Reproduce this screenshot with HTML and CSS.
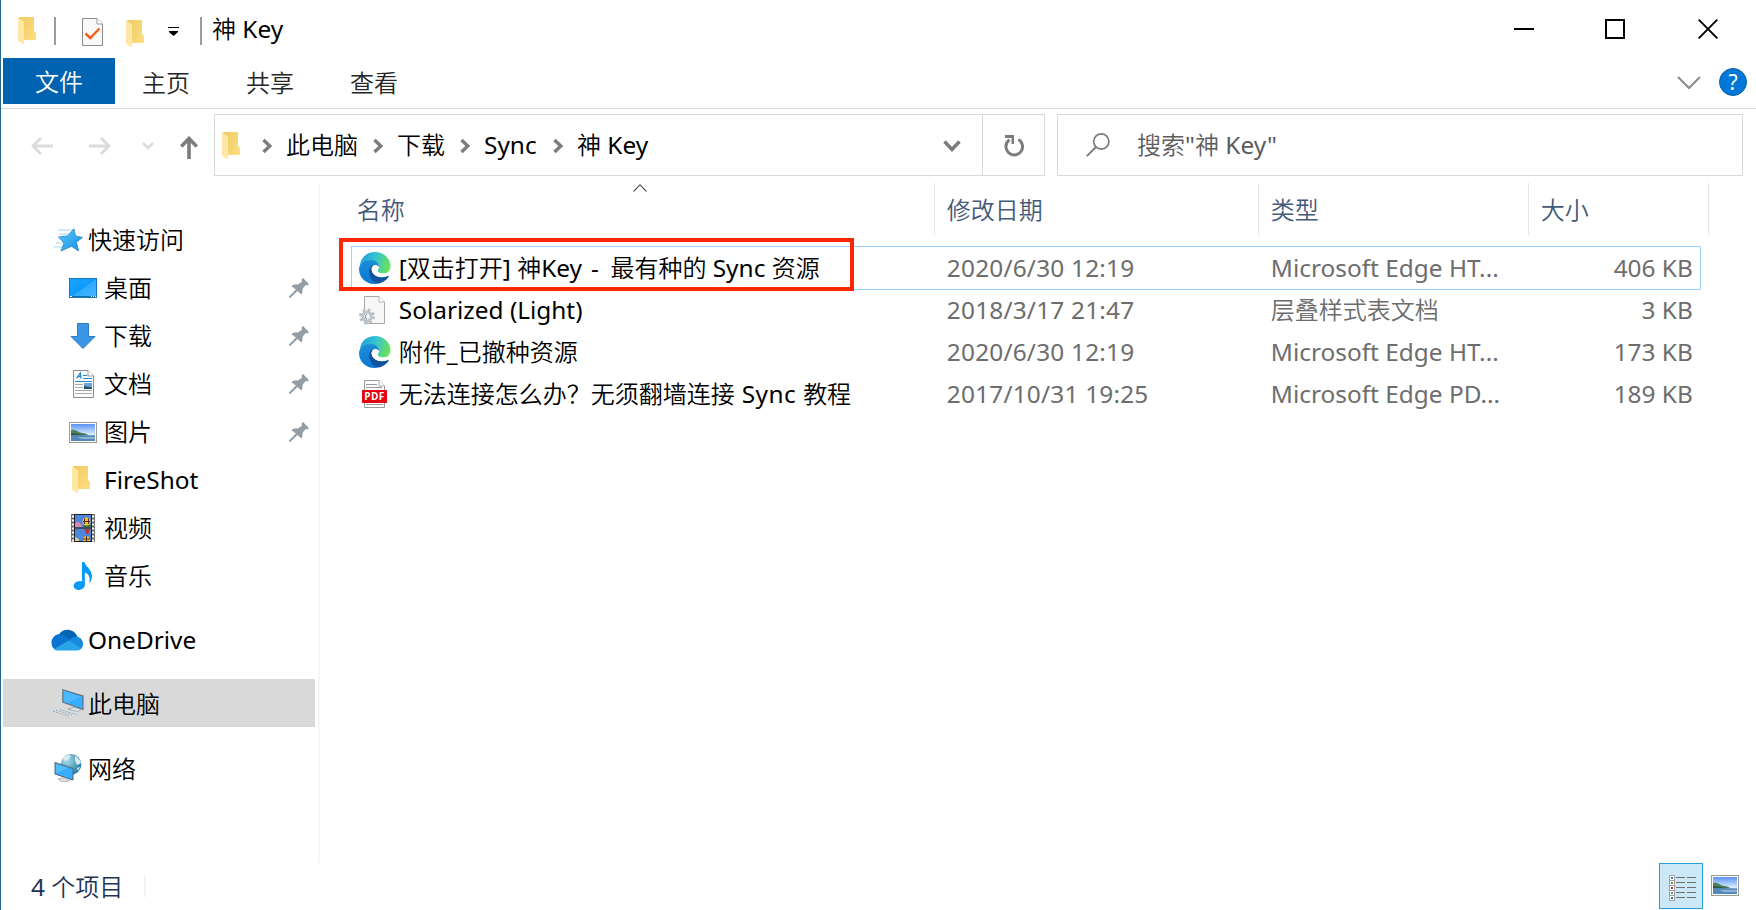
FILE: index.html
```html
<!DOCTYPE html>
<html lang="zh-CN">
<head>
<meta charset="utf-8">
<title>神 Key</title>
<link rel="stylesheet" href="styles.css">
</head>
<body>
<svg class="defs" width="0" height="0">
  <defs>
    <linearGradient id="gFold" x1="0" x2="1" y1="0" y2="1"><stop offset="0" stop-color="#efc964"/><stop offset="1" stop-color="#ffe083"/></linearGradient>
    <linearGradient id="gDesk" x1="0" x2="1" y1="0" y2="1"><stop offset="0" stop-color="#1aa3ff"/><stop offset=".5" stop-color="#0d9bfb"/><stop offset=".52" stop-color="#2fabff"/><stop offset="1" stop-color="#49b7ff"/></linearGradient>
    <linearGradient id="gSky" x1="0" x2="0" y1="0" y2="1"><stop offset="0" stop-color="#5a92f5"/><stop offset=".6" stop-color="#d5ebfb"/></linearGradient>
    <linearGradient id="gStar" x1="0" x2="1" y1="0" y2="1"><stop offset="0" stop-color="#5cc4fb"/><stop offset="1" stop-color="#1593e8"/></linearGradient>
    <linearGradient id="gEdgeTop" x1="0" x2="1" y1=".3" y2=".5"><stop offset="0" stop-color="#1f9fdc"/><stop offset=".5" stop-color="#36c3d2"/><stop offset="1" stop-color="#6ce357"/></linearGradient>
    <linearGradient id="gEdgeL" x1="0" x2="0" y1="0" y2="1"><stop offset="0" stop-color="#1b8fd6"/><stop offset="1" stop-color="#0a78d4"/></linearGradient>
    <radialGradient id="gGlobe" cx=".3" cy=".3" r=".8"><stop offset="0" stop-color="#a9dcec"/><stop offset="1" stop-color="#23789f"/></radialGradient>
    <symbol id="folder" viewBox="0 0 20 28">
      <path d="M1 0H16V14L18 16V23H6V27L1 24Z" fill="url(#gFold)"/>
      <path d="M0 0.5L6 4.5V27.5L1 24.5Q0 24 0 23Z" fill="#ffe8a6"/>
    </symbol>
    <symbol id="chev" viewBox="0 0 10 16"><path d="M1.5 2L7.8 8L1.5 14" fill="none" stroke="#7c7c7c" stroke-width="3.4"/></symbol>
    <symbol id="pin" viewBox="0 0 20 20">
      <path d="M14 0L20 6L18 7.5L16.5 7L13.5 11Q13.8 14.5 12.5 16.500L8.500 13L1.500 19.8L0 19.8V18.5L6.800 11.5L2.300 8Q5 5.800 8.8 6.500L13 3.8L12.5 1.8Z" fill="#929da4"/>
    </symbol>
    <symbol id="photo" viewBox="0 0 28 21">
      <rect x=".5" y=".5" width="27" height="20" fill="#fff" stroke="#9b9b9b"/>
      <rect x="2" y="2" width="24" height="17" fill="url(#gSky)"/>
      <path d="M2 8Q5 7 8 9T14 11T20 13.5H2Z" fill="#4e7f5c"/>
      <path d="M2 11Q8 11 17 13.5H2Z" fill="#2f5a43"/>
      <rect x="2" y="13.3" width="24" height="5.7" fill="#5588ba"/>
      <path d="M8 15H26V17H13Z" fill="#8fb4d2"/>
    </symbol>
    <symbol id="edge" viewBox="0 0 32 32">
      <path d="M1 13C2 5 8 0 16 0C25 0 31.500 7 31.500 14C31.500 19 28 21.500 24 21.500C21 21.500 18.500 20.500 18.500 19C18.500 17.500 20 17 20 15C20 12 17 9 12 9C7 9 3 12 0 17Z" fill="url(#gEdgeTop)"/>
      <path d="M0 17C1 11 6 8 11.500 8C17 8 20 11.500 20 14.500L16 13C12 14 10 19 12 24C13.500 28 16 31 20 31.500C8 34 0 26 0 17Z" fill="url(#gEdgeL)"/>
      <path d="M15.500 12.800C11.500 13 9.800 17 10.300 21C11 27 15 31.500 20 31.500C24 30.700 27.500 28 29.500 25C30 24 29.200 23.600 28.300 24C20 27.500 12.500 22.500 12.600 17C12.800 15 14 13.500 15.500 12.800Z" fill="#1253a0"/>
      <path d="M12.600 17C12.800 14.600 14.500 13 16.300 13C18.700 13 20 15 19 16.900C17.900 18.700 19.500 20.900 22 21.400C24.500 21.900 27.500 21.400 29.500 20.400L28.600 23.900C20 27.500 12.500 22.500 12.600 17Z" fill="#fff"/>
    </symbol>
  </defs>
</svg>

<div class="window">
  <header class="titlebar">
    <svg class="tb-folder"><use href="#folder"/></svg>
    <i class="tb-sep tb-sep-1"></i>
    <svg class="tb-doc" viewBox="0 0 21 28">
      <path d="M.5 .5H15L20.500 6V27.500H.5Z" fill="#f7f9fb" stroke="#8b8b8b"/>
      <path d="M15 .5V6H20.500" fill="#fff" stroke="#9b9b9b"/>
      <path d="M3.500 15.500L8.300 20L17.500 10.500" fill="none" stroke="#f95d12" stroke-width="2.400"/>
    </svg>
    <svg class="tb-folder tb-folder-2"><use href="#folder"/></svg>
    <svg class="tb-drop" viewBox="0 0 11 9"><path d="M0 .5H11" stroke="#000"/><path d="M1 4H10V5L5.500 9L1 5Z"/></svg>
    <i class="tb-sep tb-sep-2"></i>
    <span class="tb-title">神<span class="l"> Key</span></span>
    <div class="controls">
      <svg class="min" viewBox="0 0 20 20"><path d="M0 10H20" stroke="#000" stroke-width="2"/></svg>
      <svg class="max" viewBox="0 0 20 20"><rect x="1" y="1" width="18" height="18" fill="none" stroke="#000" stroke-width="2"/></svg>
      <svg class="close" viewBox="0 0 20 20"><path d="M.7 .7L19.300 19.300M19.300 .7L.7 19.300" stroke="#000" stroke-width="1.900"/></svg>
    </div>
  </header>

  <nav class="ribbon">
    <span class="tab-file">文件</span>
    <span class="tab">主页</span>
    <span class="tab">共享</span>
    <span class="tab">查看</span>
    <svg class="collapse" viewBox="0 0 24 14"><path d="M1 1L12 12L23 1" fill="none" stroke="#8b8b8b" stroke-width="2"/></svg>
    <span class="help">?</span>
  </nav>

  <div class="navbar">
    <div class="arrows">
      <svg class="back" viewBox="0 0 22 18"><path d="M22 9H2M10 1L2 9L10 17" fill="none" stroke="#dcdcdc" stroke-width="3"/></svg>
      <svg class="fwd" viewBox="0 0 22 18"><path d="M0 9H20M12 1L20 9L12 17" fill="none" stroke="#dcdcdc" stroke-width="3"/></svg>
      <svg class="recent" viewBox="0 0 12 8"><path d="M1 1L6 6L11 1" fill="none" stroke="#dcdcdc" stroke-width="2.600"/></svg>
      <svg class="up" viewBox="0 0 18 23"><path d="M9 23V3M1.200 10.500L9 2.500L16.800 10.500" fill="none" stroke="#7c7c7c" stroke-width="3.600"/></svg>
    </div>
    <div class="address">
      <svg class="ad-folder"><use href="#folder"/></svg>
      <svg class="chev c1"><use href="#chev"/></svg>
      <span class="crumb k1">此电脑</span>
      <svg class="chev"><use href="#chev"/></svg>
      <span class="crumb k2">下载</span>
      <svg class="chev"><use href="#chev"/></svg>
      <span class="crumb k3"><span class="l">Sync</span></span>
      <svg class="chev"><use href="#chev"/></svg>
      <span class="crumb k4">神<span class="l"> Key</span></span>
      <svg class="ad-drop" viewBox="0 0 18 12"><path d="M1.500 1.500L9 9.500L16.500 1.500" fill="none" stroke="#7c7c7c" stroke-width="3.400"/></svg>
      <span class="refresh">
        <svg width="20" height="22" viewBox="0 0 20 22"><path d="M14.500 4.500A8.300 8.300 0 1 1 5.500 4.800" fill="none" stroke="#7c7c7c" stroke-width="3"/><path d="M1 0H10V9H7.500V3H1Z" fill="#7c7c7c"/></svg>
      </span>
    </div>
    <div class="search">
      <svg class="glass" viewBox="0 0 24 24"><circle cx="15.300" cy="8.500" r="7.600" fill="none" stroke="#7b7b7b" stroke-width="1.700"/><path d="M10 14L.8 23.200" stroke="#7b7b7b" stroke-width="1.900"/></svg>
      <span class="query">搜索<span class="l">"</span>神<span class="l"> Key"</span></span>
    </div>
  </div>

  <main class="body">
    <aside class="side">
      <div class="item root">
        <svg class="ico" width="30" height="24" viewBox="0 0 30 24"><path d="M5 2H20M6 6H16M3 15H12M1 19H10" stroke="#a7d5f2" stroke-width="1.200"/><path d="M21 .8L22.500 8L29.500 9.500L23.500 14L25.500 23L18.500 18.300L8 23L11 15L5.500 9L14.500 8Z" fill="url(#gStar)" stroke="#2286c3" stroke-width=".8"/></svg>
        <span>快速访问</span>
      </div>
      <div class="item"><svg class="ico" width="28" height="20" viewBox="0 0 28 20"><rect x=".5" y=".5" width="27" height="19" fill="url(#gDesk)" stroke="#1878b8"/><path d="M1 18.500H27" stroke="#0f6eae"/><path d="M1 18.500H3M22 18.500H23M24 18.500H25M26 18.500H27" stroke="#fff"/></svg><span>桌面</span><svg class="pin"><use href="#pin"/></svg></div>
      <div class="item"><svg class="ico" width="26" height="26" viewBox="0 0 26 26"><path d="M7.500 .5H18.500V13.500H25L13 25.500L1 13.500H7.500Z" fill="#3c96e6" stroke="#2a7ccb"/></svg><span>下载</span><svg class="pin"><use href="#pin"/></svg></div>
      <div class="item"><svg class="ico doc" width="21" height="28" viewBox="0 0 21 28"><path d="M.5 .5H15L20.500 6V27.500H.5Z" fill="#fcfcfc" stroke="#8b8b8b"/><path d="M15 .5V6H20.500" fill="#fff" stroke="#9b9b9b"/><path d="M3.500 8.500L7.300 3L8 8.500M5 6.500H8" fill="none" stroke="#1e88d0" stroke-width="1.300"/><path d="M10 5.500H14M10 8.500H19M2 11.500H19" stroke="#1e88d0" stroke-width="1.200"/><path d="M2 14.500H10M2 17.500H10M2 20.500H19M2 23.500H19" stroke="#a9a9a9"/><rect x="11" y="13" width="8" height="6" fill="#6fa0d3"/><path d="M11 16L19 17.500V19H11Z" fill="#245069"/></svg><span>文档</span><svg class="pin"><use href="#pin"/></svg></div>
      <div class="item"><svg class="ico" width="28" height="21"><use href="#photo"/></svg><span>图片</span><svg class="pin"><use href="#pin"/></svg></div>
      <div class="item"><svg class="ico fold" width="20" height="28"><use href="#folder"/></svg><span><span class="l">FireShot</span></span></div>
      <div class="item"><svg class="ico" width="24" height="28" viewBox="0 0 24 28"><rect width="24" height="28" fill="#6b6b6b"/><path d="M2 1.500V28M22 1.500V28" stroke="#fff" stroke-width="2.200" stroke-dasharray="2 2"/><rect x="3.500" y="1" width="17" height="12.500" fill="#4d86dd"/><rect x="3.500" y="14.500" width="17" height="12.500" fill="#4d86dd"/><path d="M4 10Q6 6 9 9L12 13H4Z" fill="#d68bb6"/><path d="M12 11H20V13H12Z" fill="#2f7a3c"/><circle cx="15.500" cy="7.500" r="4" fill="#f3c429"/><path d="M13.500 4.500V10M17.500 4.500V10M12 7.500H19" stroke="#5a2a22" stroke-width="1.100"/><path d="M13.500 15H19L17 20H15.500Z" fill="#c6332a"/><path d="M12 27Q12 22 15.500 22T19 27Z" fill="#f3c429"/><path d="M15.500 22V27M12 25H19" stroke="#5a2a22"/><path d="M4 23L8 25V27H4Z" fill="#d2cf9a"/><path d="M3.500 0V28M20.500 0V28M3 .5H21M3 14H21M3 27.500H21" stroke="#222"/></svg><span>视频</span></div>
      <div class="item"><svg class="ico" width="20" height="28" viewBox="0 0 20 28"><ellipse cx="6.200" cy="23.500" rx="5.700" ry="4.300" transform="rotate(-12 6.200 23.500)" fill="#069bfa"/><path d="M9 0H11.500C12 4 19 7.500 19 14C19 17 18 19 16.800 20.800L16.300 20.500C17.500 15 15.500 11.500 11.800 10.500V23.500H9Z" fill="#069bfa"/></svg><span>音乐</span></div>
      <div class="item root onedrive">
        <svg class="ico" width="32" height="22" viewBox="0 0 32 22"><path d="M8 5.500C11-.5 22-2 26.500 7.500L20 13L9 9Z" fill="#0563b6"/><path d="M8 5C13 4.500 15 8 20 10.500L4 20.500C-1 18-1.500 7 8 5Z" fill="#0a74d0"/><path d="M20 10C23 7 29 6.500 31.500 12Q33 17 30 20L16 13Z" fill="#158be0"/><path d="M3 20L18 11.500L30.500 19.500Q29 21.500 26 21.500H7Q4.500 21.500 3 20Z" fill="#28a4e9"/></svg>
        <span><span class="l">OneDrive</span></span>
      </div>
      <div class="item root selected">
        <svg class="ico" width="32" height="28" viewBox="0 0 32 28"><path d="M10.800 .8L31 7V20.500L10.800 13Z" fill="#35aeff" stroke="#63727c" stroke-width="1.200"/><path d="M11.500 2L29 8L15 14L11.500 12.500Z" fill="#63c1ff" opacity=".5"/><path d="M16 20L22 18.500L29 20.500L26 22.500Z" fill="#eaf1f5" stroke="#8499a5" stroke-width=".7"/><path d="M1 22L8 20L25 25L18 28Z" fill="#e2e7ea"/><path d="M1 22L18 27.500M4 21L21 26.500M8 20.500L24 25.500" stroke="#8fa0ab" stroke-dasharray="2 1"/></svg>
        <span>此电脑</span>
      </div>
      <div class="item root network">
        <svg class="ico" width="28" height="28" viewBox="0 0 28 28"><circle cx="17" cy="10.500" r="10.400" fill="url(#gGlobe)"/><path d="M9 4Q14 0 17 2L14 6L10 7ZM21 2Q26 5 27 9L23 11L21 6ZM23 14L26 13L24 17Z" fill="#d7eef3"/><path d="M1 8.500L19 14.500V26L1 20Z" fill="#35aeff" stroke="#56656e"/><path d="M2 10L14 14L2 19Z" fill="#70c7ff" opacity=".55"/><path d="M4 25L10 23.500L16 26L13 28H8Z" fill="#d7dde0" stroke="#8a969d" stroke-width=".6"/></svg>
        <span>网络</span>
      </div>
    </aside>

    <section class="files">
      <div class="head">
        <span class="h-name">名称<svg class="sort" viewBox="0 0 14 8"><path d="M.5 7.500L7 .8L13.500 7.500" fill="none" stroke="#555" stroke-width="1.100"/></svg></span>
        <span>修改日期</span><span>类型</span><span>大小</span>
      </div>
      <div class="rows">
        <div class="row focus">
          <svg class="fi"><use href="#edge"/></svg>
          <span class="name"><span class="l">[</span>双击打开<span class="l">] </span>神<span class="l">Key</span><span class="l dash"> - </span>最有种的<span class="l"> Sync </span>资源</span>
          <span class="l num">2020/6/30 12:19</span><span class="l">Microsoft Edge HT...</span><span class="l size">406 KB</span>
          <div class="mark"></div>
        </div>
        <div class="row">
          <svg class="fi" viewBox="0 0 32 32"><path d="M5.500 2.500H20L25.500 8V29.500H5.500Z" fill="#f7f7f7" stroke="#a8a8a8"/><path d="M20 2.500V8H25.500" fill="#fff" stroke="#b5b5b5"/><circle cx="8" cy="22.500" r="6.500" fill="none" stroke="#b4bfc8" stroke-width="3" stroke-dasharray="2.600 2.500"/><circle cx="8" cy="22.500" r="4.400" fill="#f4f6f8" stroke="#b9c4cc" stroke-width="3"/><path d="M8 20.300A2.500 2.500 0 0 0 8 25" fill="none" stroke="#75838e"/></svg>
          <span class="name"><span class="l">Solarized (Light)</span></span>
          <span class="l num">2018/3/17 21:47</span><span class="kind">层叠样式表文档</span><span class="l size">3 KB</span>
        </div>
        <div class="row">
          <svg class="fi"><use href="#edge"/></svg>
          <span class="name">附件<span class="l">_</span>已撤种资源</span>
          <span class="l num">2020/6/30 12:19</span><span class="l">Microsoft Edge HT...</span><span class="l size">173 KB</span>
        </div>
        <div class="row">
          <svg class="fi" viewBox="0 0 32 32"><path d="M5.500 2.500H20L25.500 8V29.500H5.500Z" fill="#fff" stroke="#9a9a9a"/><path d="M20 2.500V8H25.500" fill="#fff" stroke="#aaa"/><path d="M7 6.500H18M7 9.500H23M7 26.500H24" stroke="#999"/><rect x="3" y="12" width="25" height="13" fill="#e30613"/><text x="15.500" y="22" class="pdf">PDF</text></svg>
          <span class="name">无法连接怎么办？无须翻墙连接<span class="l wide"> Sync </span>教程</span>
          <span class="l num">2017/10/31 19:25</span><span class="l">Microsoft Edge PD...</span><span class="l size">189 KB</span>
        </div>
      </div>
    </section>
  </main>

  <footer class="status">
    <span class="count"><span class="l">4 </span>个项目</span>
    <i class="st-sep"></i>
    <span class="view-details">
      <svg width="27" height="26" viewBox="0 0 27 26"><g fill="#fff" stroke="#a0a0a0"><path d="M.5 .5H5.500V25.500H.5ZM.5 5.500H5.500M.5 10.500H5.500M.5 15.500H5.500M.5 20.500H5.500"/></g><path d="M3 2V4" stroke="#357aa5" stroke-width="2"/><path d="M3 7V9" stroke="#6d8b3b" stroke-width="2"/><path d="M3 12V14" stroke="#a9331f" stroke-width="2"/><path d="M3 17V19" stroke="#739a92" stroke-width="2"/><path d="M3 22V24" stroke="#2c7396" stroke-width="2"/><path d="M7 2.500H16M18 2.500H27M7 7.500H16M18 7.500H27M7 12.500H16M18 12.500H27M7 17.500H16M18 17.500H27M7 22.500H16M18 22.500H27" stroke="#707070"/></svg>
    </span>
    <svg class="view-photo"><use href="#photo"/></svg>
  </footer>
</div>
</body>
</html>
```
FILE: styles.css
```css
* { box-sizing: border-box; }
body {
  margin: 0;
  background: #fff;
  color: #000;
  font-family: "Noto Sans CJK SC", sans-serif;
  font-size: 24px;
  line-height: 36px;
  font-weight: 350;
}
svg { display: block; flex: none; }
.defs { position: absolute; }
.l {
  font-family: "Noto Sans", "Open Sans", sans-serif;
  font-size: 24.4px;
  font-weight: 400;
  line-height: 1;
  white-space: pre;
}
.window {
  width: 1756px;
  height: 910px;
  display: flex;
  flex-direction: column;
  border-left: 1px solid #23698e;
  overflow: hidden;
}

/* title bar */
.titlebar { height: 58px; display: flex; align-items: flex-start; padding-left: 17px; flex: none; }
.tb-folder { width: 20px; height: 28px; margin-top: 17px; }
.tb-sep { width: 2px; height: 28px; margin-top: 17px; background: #9b9b9b; }
.tb-sep-1 { margin-left: 16px; }
.tb-doc { width: 21px; height: 28px; margin: 18px 0 0 26px; }
.tb-folder-2 { margin: 20px 0 0 23px; }
.tb-drop { width: 11px; height: 9px; margin: 27px 0 0 22px; }
.tb-sep-2 { margin-left: 21px; }
.tb-title { margin: 10px 0 0 10px; white-space: nowrap; }
.controls { display: flex; margin: 19px 38px 0 auto; }
.controls svg { width: 20px; height: 20px; }
.max { margin-left: 71px; }
.close { margin-left: 73px; }

/* ribbon tabs */
.ribbon { height: 51px; display: flex; padding-left: 2px; flex: none; border-bottom: 1px solid #dadada; color: #262626; }
.tab-file { width: 112px; height: 46px; line-height: 46px; text-align: center; background: #0063b1; color: #fff; }
.tab { width: 104px; padding-left: 27px; line-height: 48px; }
.collapse { width: 24px; height: 14px; margin: 18px 18px 0 auto; }
.help {
  width: 28px; height: 28px; margin: 10px 9px 0 0; border-radius: 50%;
  background: #0078d7; border: 1px solid #0b5fa8; color: #fff;
  font: 400 21px/26px "Noto Sans", sans-serif; text-align: center;
}

/* navigation and address bar */
.navbar { height: 74px; display: flex; padding-top: 5px; flex: none; }
.arrows { width: 213px; height: 62px; display: flex; align-items: center; padding-left: 30px; padding-top: 2px; }
.back, .fwd { width: 22px; height: 18px; }
.fwd { margin-left: 36px; }
.recent { width: 12px; height: 8px; margin-left: 31px; }
.up { width: 18px; height: 23px; margin: 2px 0 0 26px; }
.address { width: 831px; height: 62px; border: 1px solid #d9d9d9; display: flex; align-items: center; padding-left: 7px; }
.ad-folder { width: 20px; height: 28px; margin-top: 1px; }
.chev { width: 10px; height: 16px; margin-top: 2px; }
.c1 { margin-left: 20px; }
.crumb { white-space: nowrap; }
.crumb, .query { padding-bottom: 2px; }
.k1 { width: 87px; margin-left: 14px; }
.k2 { width: 63px; margin-left: 14px; }
.k3 { width: 69px; margin-left: 14px; }
.k4 { margin-left: 14px; }
.ad-drop { width: 18px; height: 12px; margin: 2px 21px 0 auto; }
.refresh { width: 62px; height: 60px; border-left: 1px solid #d9d9d9; padding: 20px 0 0 21px; }
.search { width: 686px; height: 62px; margin-left: 12px; border: 1px solid #d9d9d9; display: flex; align-items: center; color: #5c5c5c; }
.glass { width: 24px; height: 24px; margin: 0 27px 0 28px; }

/* navigation pane */
.body { height: 680px; display: flex; flex: none; }
.side { width: 319px; border-right: 2px solid #f7f7f7; padding: 33px 3px 0 2px; }
.item { height: 48px; display: grid; align-items: center; grid-template-columns: 37px 1fr auto; padding: 0 19px 0 64px; }
.item > span { white-space: nowrap; padding-bottom: 2px; }
.item .ico { justify-self: center; margin-right: 5px; }
.item .fold { margin-right: 7px; }
.item .pin { width: 20px; height: 20px; margin-right: -13px; }
.item.root { grid-template-columns: 36px 1fr; padding: 0 0 0 49px; }
.item.root .ico { justify-self: start; margin: 0 0 0 1px; }
.onedrive { margin-top: 16px; }
.item.onedrive .ico { margin-left: -1px; }
.selected { margin-top: 15px; background: #d9d9d9; }
.item.selected .ico { margin-left: 0; }
.network { margin-top: 17px; }
.item.network .ico { margin-left: 2px; }
.selected > span, .network > span { transform: translateY(1px); }

/* file list */
.files { width: 1437px; }
.head { height: 51px; display: grid; grid-template-columns: 615px 324px 270px 180px; color: #44597a; line-height: 52px; }
.head span { border-right: 1px solid #e5e5e5; padding-left: 12px; }
.head .h-name { padding-left: 37px; position: relative; }
.sort { position: absolute; left: 313px; top: 1px; width: 14px; height: 8px; }
.rows { padding: 13px 0 0 31px; }
.row {
  height: 42px; width: 1350px; display: grid; align-items: center;
  grid-template-columns: 48px 548px 324px 260px 1fr;
  position: relative; color: #6d6d6d; line-height: 42px; white-space: nowrap;
}
.focus::before { content: ""; position: absolute; inset: -1px 0; border: 1px solid #99d1ff; }
.focus { z-index: 1; }
.fi { width: 32px; height: 32px; margin-left: 8px; }
.name { color: #000; }
.name, .kind { padding-bottom: 2px; line-height: 38px; }
.num { letter-spacing: .2px; }
.dash { letter-spacing: 2.6px; }
.wide { letter-spacing: .5px; }
.size { text-align: right; padding-right: 8px; }
.mark { position: absolute; left: -12px; top: -9px; width: 515px; height: 53px; border: 4px solid #ff2600; }
.pdf { font: 700 10px "Open Sans", sans-serif; fill: #fff; text-anchor: middle; letter-spacing: .4px; }

/* status bar */
.status { height: 47px; display: flex; color: #1e3454; }
.count { padding: 5px 0 0 30px; width: 143px; white-space: nowrap; }
.st-sep { width: 2px; height: 22px; margin-top: 12px; background: #f3f3f3; }
.view-details { width: 44px; height: 46px; margin-left: auto; border: 1px solid #26a0da; background: #cce8f6; padding: 11px 0 0 9px; }
.view-photo { width: 28px; height: 21px; margin: 12px 17px 0 8px; }
```
